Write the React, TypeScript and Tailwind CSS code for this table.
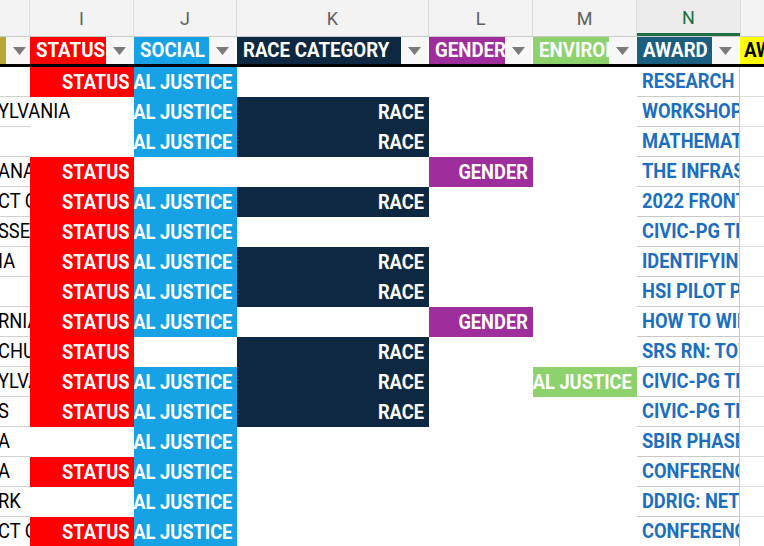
import React from "react";

type Row = {
  h: string;
  hOver?: boolean;
  i?: boolean;
  j?: boolean;
  k?: boolean;
  l?: boolean;
  m?: boolean;
  n: string;
};

const rows: Row[] = [
  { h: "", i: true, j: true, n: "RESEARCH INITIATION" },
  { h: "YLVANIA", hOver: true, j: true, k: true, n: "WORKSHOP ON" },
  { h: "", j: true, k: true, n: "MATHEMATICAL" },
  { h: "ANA", i: true, l: true, n: "THE INFRASTRUCTURE" },
  { h: "CT OF", i: true, j: true, k: true, n: "2022 FRONTIERS" },
  { h: "SSEE", i: true, j: true, n: "CIVIC-PG TRACK" },
  { h: "IA", i: true, j: true, k: true, n: "IDENTIFYING" },
  { h: "", i: true, j: true, k: true, n: "HSI PILOT PROJECT" },
  { h: "RNIA", i: true, j: true, l: true, n: "HOW TO WIN" },
  { h: "CHU", i: true, k: true, n: "SRS RN: TOWARD" },
  { h: "YLVA", i: true, j: true, k: true, m: true, n: "CIVIC-PG TRACK" },
  { h: "S", i: true, j: true, k: true, n: "CIVIC-PG TRACK" },
  { h: "A", j: true, n: "SBIR PHASE I" },
  { h: "A", i: true, j: true, n: "CONFERENCE" },
  { h: "RK", j: true, n: "DDRIG: NETWORK" },
  { h: "CT OF", i: true, j: true, n: "CONFERENCE" },
];

const COLS =
  "grid grid-cols-[30px_104px_103px_192px_104px_104px_103px_1fr]";

function Tri() {
  return (
    <svg width="13" height="8" viewBox="0 0 13 8">
      <path d="M0 0 L13 0 L6.5 8 Z" fill="#7b7b7b" />
    </svg>
  );
}

function Drop() {
  return (
    <div className="w-[26px] mr-[2px] h-full bg-[#f7f7f7] flex items-center justify-center shrink-0">
      <Tri />
    </div>
  );
}

function FilterCell({
  bg,
  label,
}: {
  bg: string;
  label?: string;
}) {
  return (
    <div className="flex h-full bg-white">
      <div className={`flex-1 h-full ${bg} overflow-hidden flex items-center pl-[6px]`}>
        {label ? (
          <span className="inline-block whitespace-nowrap origin-left scale-x-[0.89] text-white font-bold text-[21px] leading-none">
            {label}
          </span>
        ) : null}
      </div>
      <Drop />
    </div>
  );
}

function FillCell({ on, bg, text }: { on?: boolean; bg: string; text: string }) {
  return (
    <div
      className={`h-[30px] overflow-hidden flex items-center justify-end pr-[5px] ${
        on ? bg : "bg-white"
      }`}
    >
      {on ? (
        <span className="inline-block shrink-0 whitespace-nowrap origin-right scale-x-[0.87] text-white font-bold text-[21px] leading-none">
          {text}
        </span>
      ) : null}
    </div>
  );
}

export default function App() {
  return (
    <div
      className="w-[764px] h-[546px] overflow-hidden bg-white"
      style={{ fontFamily: "Roboto, 'Liberation Sans', sans-serif" }}
    >
      {/* column letters */}
      <div className={`${COLS} h-[37px] bg-[#f3f3f3] border-b border-[#c9c9c9]`}>
        <div className="border-r border-[#dcdcdc]" />
        {["I", "J", "K", "L", "M"].map((c) => (
          <div
            key={c}
            className="border-r border-[#dcdcdc] flex items-center justify-center text-[18px] text-[#5f5f5f]"
          >
            {c}
          </div>
        ))}
        <div className="border-b-[3px] border-[#1e7145] bg-[#ebebeb] flex items-center justify-center text-[18px] text-[#1e6b40] pt-[2px]">
          N
        </div>
        <div className="border-l border-[#dcdcdc]" />
      </div>

      {/* filter row */}
      <div className={`${COLS} h-[30px] border-b-[3px] border-black bg-white`}>
        <FilterCell bg="bg-[#b8a639]" />
        <FilterCell bg="bg-[#ff0000]" label="STATUS" />
        <FilterCell bg="bg-[#17a2e5]" label="SOCIAL JUSTICE" />
        <FilterCell bg="bg-[#0f2841]" label="RACE CATEGORY" />
        <FilterCell bg="bg-[#9e2e9b]" label="GENDER" />
        <FilterCell bg="bg-[#8ed26d]" label="ENVIRONMENTAL" />
        <FilterCell bg="bg-[#1b5f80]" label="AWARD" />
        <div className="h-full bg-[#ffff00] overflow-hidden flex items-center pl-[4px]">
          <span className="inline-block whitespace-nowrap origin-left scale-x-[0.89] text-black font-bold text-[21px] leading-none">
            AWARD
          </span>
        </div>
      </div>

      {/* data rows */}
      {rows.map((r, idx) => (
        <div key={idx} className={`${COLS} h-[30px]`}>
          <div
            className={`relative z-10 h-[30px] border-b border-[#d0d0d0] flex items-center ${
              r.hOver ? "overflow-visible" : "overflow-hidden"
            }`}
          >
            <span className="inline-block shrink-0 whitespace-nowrap origin-left scale-x-[0.87] text-black text-[21px] leading-none ml-[-2px]">
              {r.h}
            </span>
          </div>
          <FillCell on={r.i} bg="bg-[#ff0000]" text="STATUS" />
          <FillCell on={r.j} bg="bg-[#17a2e5]" text="SOCIAL JUSTICE" />
          <FillCell on={r.k} bg="bg-[#0f2841]" text="RACE" />
          <FillCell on={r.l} bg="bg-[#9e2e9b]" text="GENDER" />
          <FillCell on={r.m} bg="bg-[#8ed26d]" text="ENVIRONMENTAL JUSTICE" />
          <div className="h-[30px] border-b border-r border-[#c8c8c8] overflow-hidden flex items-center pl-[5px]">
            <span className="inline-block shrink-0 whitespace-nowrap origin-left scale-x-[0.87] text-[#1c6fbe] font-bold text-[21px] leading-none">
              {r.n}
            </span>
          </div>
          <div className="h-[30px] border-b border-[#dedede]" />
        </div>
      ))}
    </div>
  );
}
